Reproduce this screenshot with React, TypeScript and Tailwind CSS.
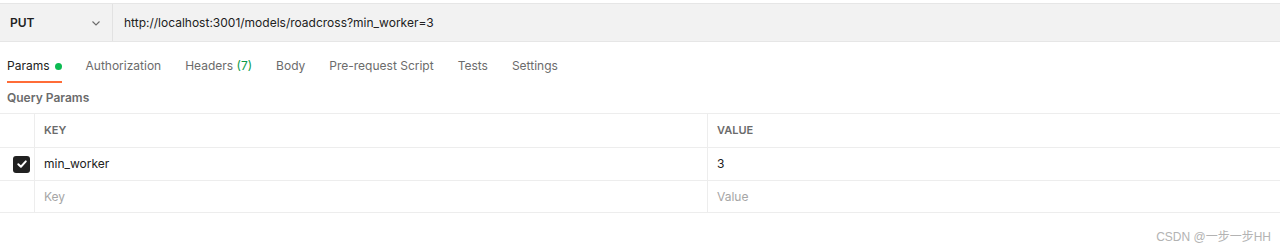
import React from "react";

export default function App() {
  const font = { fontFamily: "Inter, 'Noto Sans CJK SC', sans-serif" } as React.CSSProperties;
  return (
    <div className="w-[1280px] h-[249px] bg-white relative overflow-hidden text-[12px] text-[#212121]" style={font}>
      <div className="h-[3px] bg-white" />
      <div className="h-[39px] flex bg-[#f2f2f2] border-t border-b border-[#e6e6e6]">
        <div className="w-[113px] flex items-center justify-between pl-[10px] pr-[10px] border-r border-[#e2e2e2]">
          <span className="font-semibold text-[12px] text-[#212121]">PUT</span>
          <svg width="10" height="10" viewBox="0 0 10 10" fill="none" className="mr-[1px]">
            <path d="M1.5 3.5 L5 7 L8.5 3.5" stroke="#6b6b6b" strokeWidth="1.1" />
          </svg>
        </div>
        <div className="flex items-center pl-[11px] text-[12px] text-[#212121]">
          http://localhost:3001/models/roadcross?min_worker=3
        </div>
      </div>
      <div className="flex items-end h-[40px] pl-[7px] gap-[24px] text-[12px] text-[#6b6b6b]">
        <div className="flex flex-col">
          <div className="flex items-center gap-[5px] text-[#212121]">
            Params
            <span className="w-[7px] h-[7px] rounded-full bg-[#0cbb52]" />
          </div>
          <div className="h-[2px] mt-[6px] bg-[#ff6c37] mb-[-1px]" />
        </div>
        <div className="pb-[7px]">Authorization</div>
        <div className="pb-[7px]">Headers <span className="text-[#0a9b48]">(7)</span></div>
        <div className="pb-[7px]">Body</div>
        <div className="pb-[7px]">Pre-request Script</div>
        <div className="pb-[7px]">Tests</div>
        <div className="pb-[7px]">Settings</div>
      </div>
      <div className="h-[31px] flex items-center pl-[7px] text-[12px] font-semibold text-[#6b6b6b]">Query Params</div>
      <div className="border-t border-[#ededed]">
        <div className="flex h-[34px] border-b border-[#ededed]">
          <div className="w-[35px] border-r border-[#ededed]" />
          <div className="w-[673px] border-r border-[#ededed] flex items-center pl-[9px] text-[11px] font-semibold text-[#6b6b6b]">KEY</div>
          <div className="flex-1 flex items-center pl-[9px] text-[11px] font-semibold text-[#6b6b6b]">VALUE</div>
        </div>
        <div className="flex h-[33px] border-b border-[#ededed]">
          <div className="w-[35px] border-r border-[#ededed] flex items-center pl-[13px]">
            <div className="w-[17px] h-[17px] rounded-[3px] bg-[#212121] flex items-center justify-center">
              <svg width="12" height="12" viewBox="0 0 12 12" fill="none">
                <path d="M2.3 6.2 L4.9 8.7 L9.8 3.4" stroke="white" strokeWidth="2" strokeLinecap="round" strokeLinejoin="round" />
              </svg>
            </div>
          </div>
          <div className="w-[673px] border-r border-[#ededed] flex items-center pl-[9px]">min_worker</div>
          <div className="flex-1 flex items-center pl-[9px]">3</div>
        </div>
        <div className="flex h-[32px] border-b border-[#ededed]">
          <div className="w-[35px] border-r border-[#ededed]" />
          <div className="w-[673px] border-r border-[#ededed] flex items-center pl-[9px] text-[#a6a6a6]">Key</div>
          <div className="flex-1 flex items-center pl-[9px] text-[#a6a6a6]">Value</div>
        </div>
      </div>
      <div className="absolute right-[9px] top-[228px] text-[12px] text-[#b3b3b3]" style={{ fontFamily: "'Liberation Sans', 'Noto Sans CJK SC', sans-serif" }}>
        CSDN @一步一步HH
      </div>
    </div>
  );
}
